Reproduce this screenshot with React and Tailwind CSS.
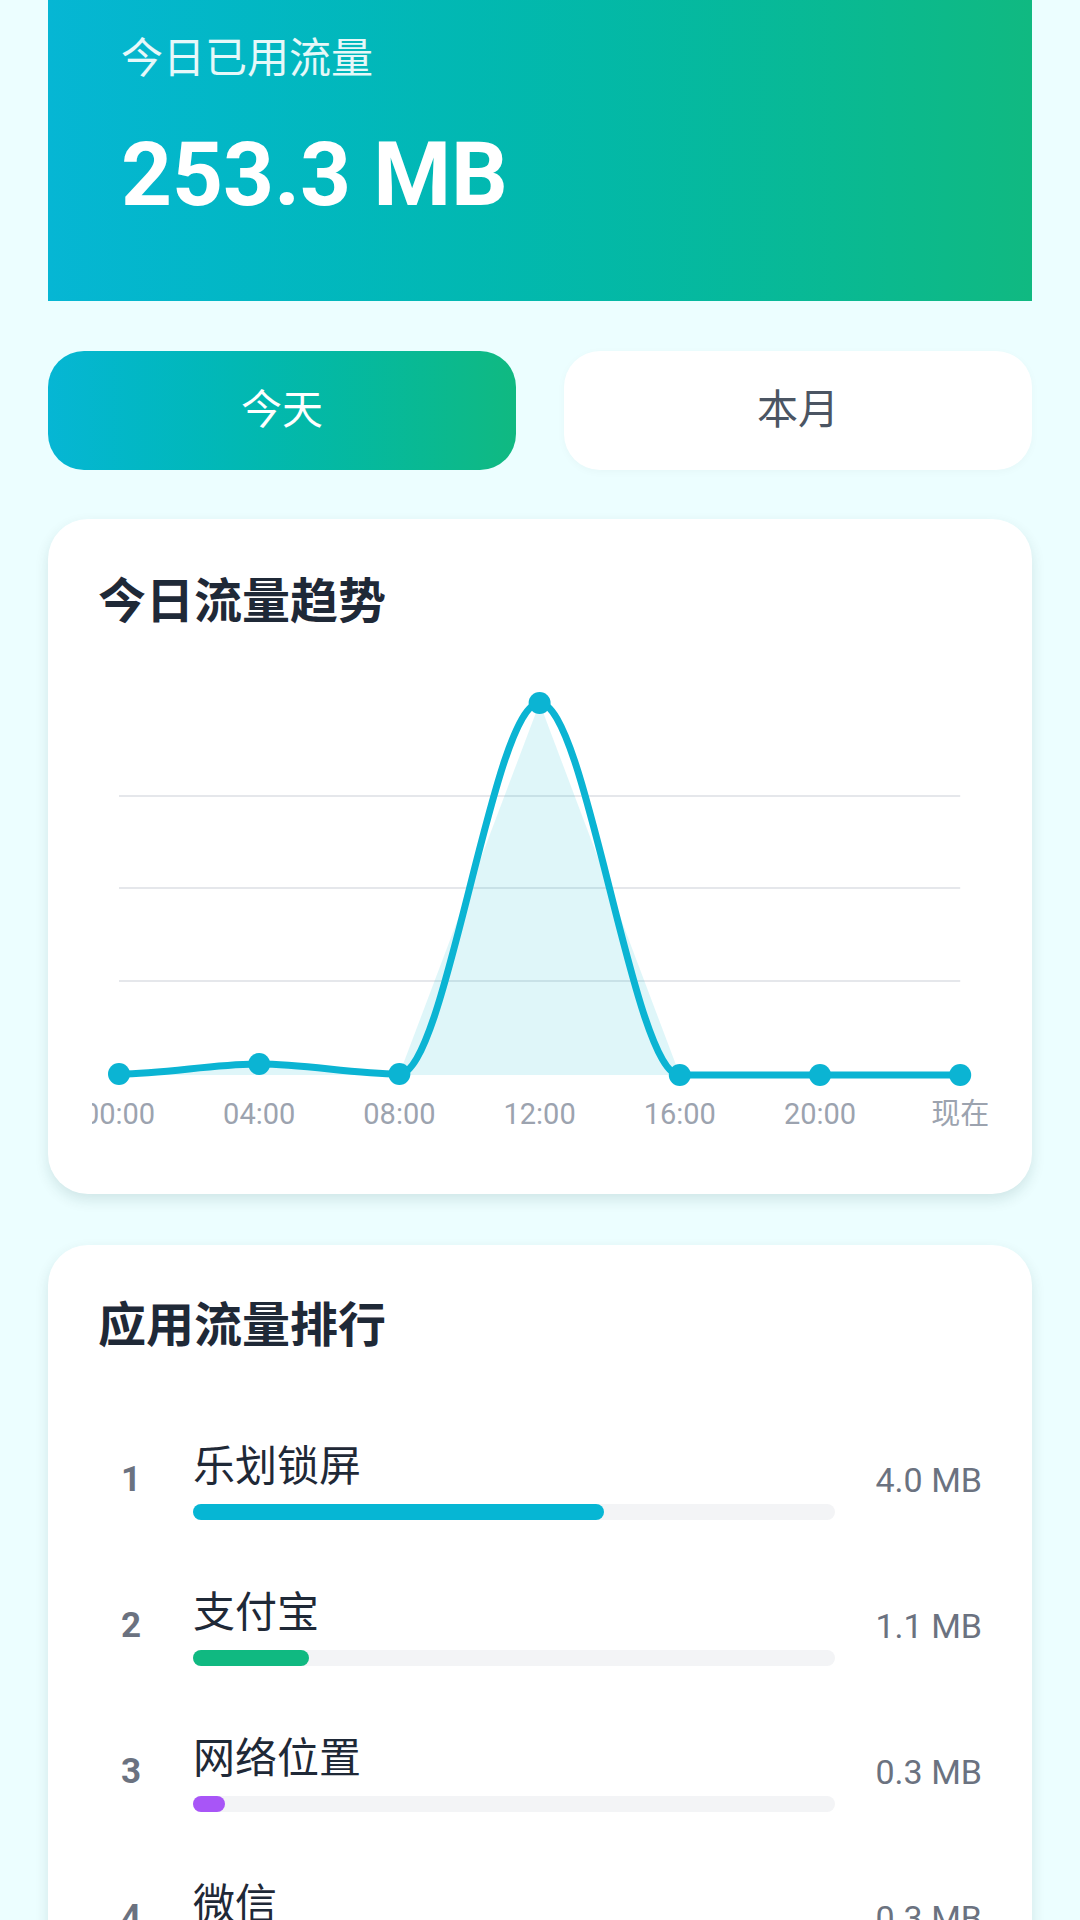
import React from 'react';

const FONT = { fontFamily: "Roboto, 'Noto Sans CJK SC', sans-serif" };

const labels = ['00:00', '04:00', '08:00', '12:00', '16:00', '20:00', '现在'];
// y positions inside the chart svg (0..490)
const values = [414, 404, 414, 43, 415, 415, 415];

function TrendChart() {
  const W = 896;
  const base = 415;
  const xs = labels.map((_, i) => 27 + i * 140.2);
  const pts = xs.map((x, i) => [x, values[i]]);

  // smooth line, horizontal tangents at every point (monotone look)
  let line = `M${pts[0][0]},${pts[0][1]}`;
  for (let i = 1; i < pts.length; i++) {
    const [x0, y0] = pts[i - 1];
    const [x1, y1] = pts[i];
    const dx = (x1 - x0) / 3;
    line += ` C${x0 + dx},${y0} ${x1 - dx},${y1} ${x1},${y1}`;
  }

  // the fill is straight segments
  const area =
    `M${pts[0][0]},${base} ` +
    pts.map(([x, y]) => `L${x},${y}`).join(' ') +
    ` L${pts[pts.length - 1][0]},${base} Z`;

  return (
    <svg width={W} height="490" viewBox={`0 0 ${W} 490`} className="-ml-[6px] block overflow-hidden">
      {[136, 228, 321].map((y) => (
        <line key={y} x1={xs[0]} x2={xs[6]} y1={y} y2={y} stroke="#e5e7eb" strokeWidth="2" />
      ))}
      <path d={area} fill="#06b6d4" fillOpacity="0.13" />
      <path d={line} fill="none" stroke="#0bb4d3" strokeWidth="7" strokeLinecap="round" />
      {pts.map(([x, y], i) => (
        <circle key={i} cx={x} cy={y} r="11" fill="#0bb4d3" />
      ))}
      {labels.map((l, i) => (
        <text
          key={l}
          x={xs[i]}
          y="464"
          textAnchor="middle"
          fontSize="29"
          fill="#9ca3af"
          style={FONT}
        >
          {l}
        </text>
      ))}
    </svg>
  );
}

const apps = [
  { name: '乐划锁屏', value: '4.0 MB', pct: 64, color: 'bg-[#06b6d4]' },
  { name: '支付宝', value: '1.1 MB', pct: 18, color: 'bg-[#10b981]' },
  { name: '网络位置', value: '0.3 MB', pct: 5, color: 'bg-[#a855f7]' },
  { name: '微信', value: '0.3 MB', pct: 5, color: 'bg-[#3b82f6]' },
];

function AppRow({ rank, app }) {
  return (
    <div className="flex items-center">
      <span className="w-[66px] text-center text-[35px] font-bold text-[#6b7280]">{rank}</span>
      <div className="ml-[29px] flex-1">
        <div className="text-[42px] leading-[53px] text-[#1f2937]">{app.name}</div>
        <div className="mt-[11px] h-[16px] w-full rounded-full bg-[#f3f4f6]">
          <div
            className={`h-full rounded-full ${app.color}`}
            style={{ width: `${app.pct}%` }}
          />
        </div>
      </div>
      <span className="w-[147px] text-right text-[34px] text-[#6b7280]">{app.value}</span>
    </div>
  );
}

export default function App() {
  return (
    <div className="min-h-[1920px] w-[1080px] overflow-hidden bg-[#ecfeff] px-12" style={FONT}>
      {/* Summary banner */}
      <div className="h-[301px] bg-gradient-to-r from-[#06b6d4] to-[#10b981] pl-[73px] pt-[34px]">
        <div className="text-[42px] leading-[50px] text-white/90">今日已用流量</div>
        <div className="mt-[46px] text-[89px] font-bold leading-[90px] text-white">253.3 MB</div>
      </div>

      {/* Tabs */}
      <div className="mt-[50px] flex gap-12">
        <button className="h-[119px] flex-1 rounded-[36px] bg-gradient-to-r from-[#06b6d4] to-[#10b981] text-[41px] text-white">
          今天
        </button>
        <button className="h-[119px] flex-1 rounded-[36px] bg-white text-[41px] text-[#4b5563] shadow-[0_2px_8px_rgba(0,0,0,0.03)]">
          本月
        </button>
      </div>

      {/* Trend card */}
      <div className="mt-[49px] h-[675px] rounded-[40px] bg-white px-[50px] pt-[53px] shadow-[0_6px_14px_rgba(0,60,60,0.12)]">
        <h2 className="text-[48px] font-bold leading-[60px] text-[#1f2937]">今日流量趋势</h2>
        <div className="mt-[28px]">
          <TrendChart />
        </div>
      </div>

      {/* Ranking card */}
      <div className="mt-[51px] rounded-[40px] bg-white px-[50px] pt-[51px] pb-12 shadow-[0_6px_14px_rgba(0,60,60,0.12)]">
        <h2 className="text-[48px] font-bold leading-[60px] text-[#1f2937]">应用流量排行</h2>
        <div className="mt-[84px] flex flex-col gap-[66px]">
          {apps.map((app, i) => (
            <AppRow key={app.name} rank={i + 1} app={app} />
          ))}
        </div>
      </div>
    </div>
  );
}
